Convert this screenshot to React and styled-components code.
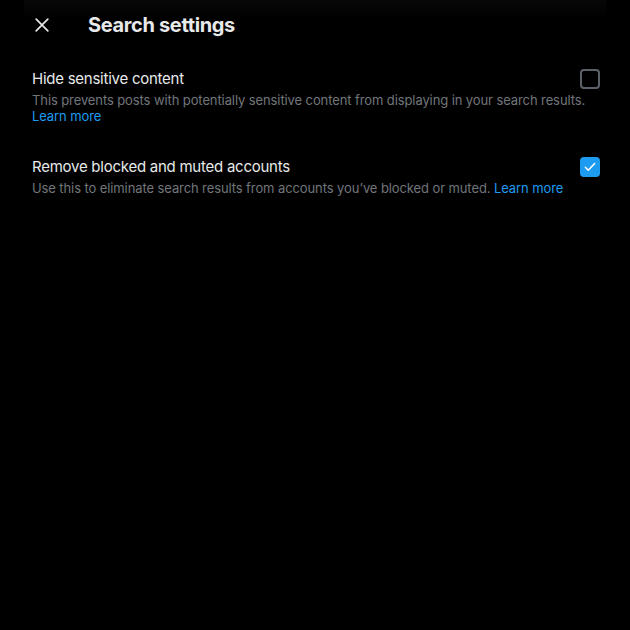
import React from "react";
import styled, { createGlobalStyle } from "styled-components";

const Global = createGlobalStyle`
  html, body { margin: 0; padding: 0; background: #000; }
  body { font-family: Inter, "Noto Sans", sans-serif; -webkit-font-smoothing: antialiased; }
`;

const Page = styled.div`
  width: 630px;
  height: 630px;
  background: #000;
  color: #e7e9ea;
  display: flex;
  flex-direction: column;
`;

const Header = styled.header`
  height: 50px;
  margin: 0 24px;
  padding: 0 8px;
  display: flex;
  align-items: center;
  gap: 36px;
  background: linear-gradient(to bottom, #070708 0px, #030303 12px, #000 18px);
`;

const IconButton = styled.button`
  width: 20px;
  height: 20px;
  padding: 0;
  border: 0;
  background: transparent;
  color: #e7e9ea;
  display: flex;
  align-items: center;
  justify-content: center;
`;

const Title = styled.h2`
  margin: 0;
  font-size: 20px;
  font-weight: 700;
  letter-spacing: -0.35px;
  line-height: 24px;
`;

const List = styled.div`
  display: flex;
  flex-direction: column;
  padding: 19px 0 0;
`;

const Row = styled.div`
  display: flex;
  flex-direction: column;
  padding: 0 30px 0 32px;
  margin-bottom: ${(p) => p.$gap || 0}px;
`;

const RowHead = styled.label`
  display: flex;
  align-items: center;
  justify-content: space-between;
  height: 20px;
`;

const RowTitle = styled.span`
  font-size: 15px;
  line-height: 20px;
  font-weight: 400;
  color: #e7e9ea;
  letter-spacing: -0.25px;
`;

const Desc = styled.p`
  margin: 3px 0 0;
  font-size: 13px;
  line-height: 16px;
  color: #71767b;
  max-width: 560px;
  letter-spacing: -0.1px;
`;

const Link = styled.a`
  color: #1d9bf0;
  text-decoration: none;
`;

const Box = styled.span`
  box-sizing: border-box;
  width: 20px;
  height: 20px;
  border-radius: 4px;
  border: 2px solid ${(p) => (p.$checked ? "#1d9bf0" : "#5b6168")};
  background: ${(p) => (p.$checked ? "#1d9bf0" : "transparent")};
  display: flex;
  align-items: center;
  justify-content: center;
`;

const Check = ({ checked }) => (
  <Box $checked={checked}>
    {checked && (
      <svg width="14" height="14" viewBox="0 0 24 24">
        <path d="M4 12.5l5 5L20 6" fill="none" stroke="#fff" strokeWidth="2.6" strokeLinecap="round" strokeLinejoin="round" />
      </svg>
    )}
  </Box>
);

export default function App() {
  return (
    <Page>
      <Global />
      <Header>
        <IconButton aria-label="Close">
          <svg width="20" height="20" viewBox="0 0 24 24">
            <path d="M5 5l14 14M19 5L5 19" stroke="#e7e9ea" strokeWidth="2" strokeLinecap="round" />
          </svg>
        </IconButton>
        <Title>Search settings</Title>
      </Header>
      <List>
        <Row $gap={33}>
          <RowHead>
            <RowTitle>Hide sensitive content</RowTitle>
            <Check checked={false} />
          </RowHead>
          <Desc>
            This prevents posts with potentially sensitive content from displaying in your search results.{" "}
            <Link href="#">Learn more</Link>
          </Desc>
        </Row>
        <Row>
          <RowHead>
            <RowTitle>Remove blocked and muted accounts</RowTitle>
            <Check checked />
          </RowHead>
          <Desc>
            Use this to eliminate search results from accounts you’ve blocked or muted.{" "}
            <Link href="#">Learn more</Link>
          </Desc>
        </Row>
      </List>
    </Page>
  );
}
